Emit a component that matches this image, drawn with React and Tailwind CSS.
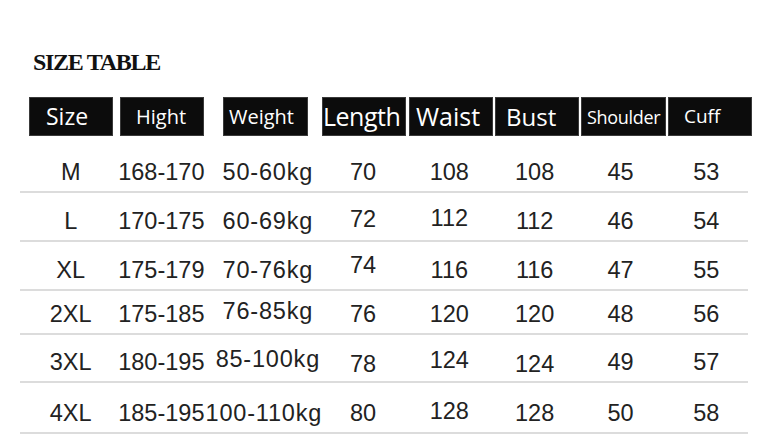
import React from 'react';

var columns = [
  { label: 'Size', w: 'w-[84px]', ml: 'ml-0', head: 'text-[23px] pl-[16px]' },
  { label: 'Hight', w: 'w-[84px]', ml: 'ml-[7px]', head: 'text-[20px] pl-[15px]' },
  { label: 'Weight', w: 'w-[85px]', ml: 'ml-[19px]', head: 'text-[20px] pl-[5px]' },
  { label: 'Length', w: 'w-[84px]', ml: 'ml-[14px]', head: 'text-[25px] pl-0 tracking-[-0.5px]' },
  { label: 'Waist', w: 'w-[84px]', ml: 'ml-[3px]', head: 'text-[25px] pl-[6px]' },
  { label: 'Bust', w: 'w-[84px]', ml: 'ml-[2px]', head: 'text-[24px] pl-[10px]' },
  { label: 'Shoulder', w: 'w-[85px]', ml: 'ml-[2px]', head: 'text-[18px] pl-[5px] tracking-[-0.3px]' },
  { label: 'Cuff', w: 'w-[84px]', ml: 'ml-[2px]', head: 'text-[19px] pl-[15px]' },
];

// cells hold [text, extra classes] where the photo sits a little off the baseline
var rows = [
  { h: 'h-[57px]', cells: [['M'], ['168-170'], ['50-60kg'], ['70'], ['108'], ['108'], ['45'], ['53']] },
  { h: 'h-[49px]', cells: [['L'], ['170-175'], ['60-69kg'], ['72', '-translate-y-[2px]'], ['112', '-translate-y-[3px]'], ['112'], ['46'], ['54']] },
  { h: 'h-[49px]', cells: [['XL'], ['175-179'], ['70-76kg'], ['74', '-translate-y-[5px]'], ['116'], ['116'], ['47'], ['55']] },
  { h: 'h-[44px]', cells: [['2XL'], ['175-185'], ['76-85kg', '-translate-y-[3px]'], ['76'], ['120'], ['120'], ['48'], ['56']] },
  { h: 'h-[48px]', cells: [['3XL'], ['180-195'], ['85-100kg', '-translate-y-[3px]'], ['78', 'translate-y-[2px]'], ['124', '-translate-y-[2px]'], ['124', 'translate-y-[2px]'], ['49'], ['57']] },
  { h: 'h-[51px]', cells: [['4XL'], ['185-195'], ['100-110kg', '-translate-x-[4px]'], ['80'], ['128', '-translate-y-[2px]'], ['128'], ['50'], ['58']] },
];

export default function App() {
  return (
    <div className="w-[767px] h-[446px] bg-white overflow-hidden pt-[50px]">
      <div className="ml-[33px] text-[24px] leading-none font-bold tracking-[-1.3px] text-[#111]" style={{ fontFamily: '"Liberation Serif", serif' }}>
        SIZE TABLE
      </div>

      <div className="flex ml-[29px] mt-[23px] h-[39px]" style={{ fontFamily: '"Open Sans", sans-serif' }}>
        {columns.map(function(col) {
          return (
            <div key={col.label} className={col.w + ' ' + col.ml + ' h-full bg-[#0c0c0c] border border-[#3a3a3a] flex items-center text-white leading-none whitespace-nowrap overflow-hidden ' + col.head}>
              {col.label}
            </div>
          );
        })}
      </div>

      <div className="ml-[20px] w-[728px]" style={{ fontFamily: '"Liberation Sans", Arial, sans-serif' }}>
        {rows.map(function(row, ri) {
          return (
            <div key={ri} className={'flex items-end pl-[9px] pb-[7px] border-b-2 border-[#dcdcdc] text-[23.5px] leading-[24px] text-[#222] ' + row.h}>
              {row.cells.map(function(cell, ci) {
                var col = columns[ci];
                var extra = ci === 2 ? ' tracking-[0.8px] pl-[6px]' : '';
                return (
                  <div key={ci} className={col.w + ' ' + col.ml + ' flex justify-center whitespace-nowrap'}>
                    <span className={'inline-block ' + (cell[1] || '') + extra}>{cell[0]}</span>
                  </div>
                );
              })}
            </div>
          );
        })}
      </div>
    </div>
  );
}
